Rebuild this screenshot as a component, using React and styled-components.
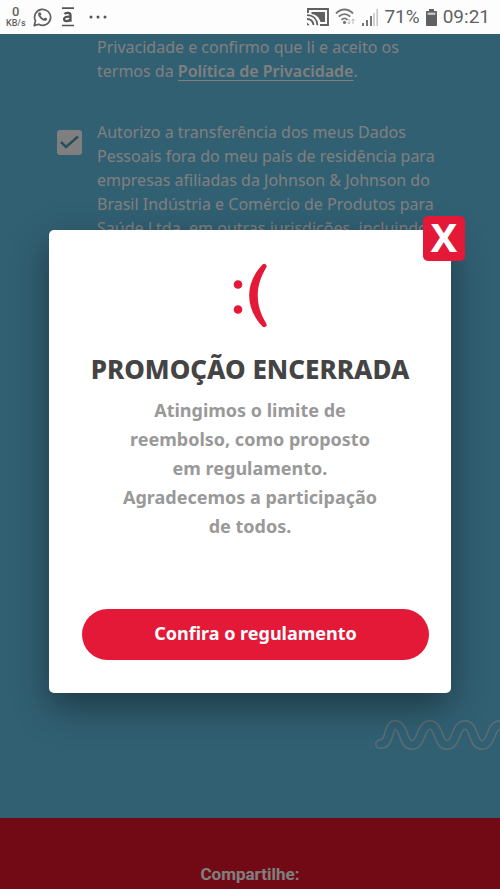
import React from "react";
import styled, { createGlobalStyle } from "styled-components";

const GlobalStyle = createGlobalStyle`
  *, *::before, *::after { box-sizing: border-box; }
  body { margin: 0; font-family: "Noto Sans", "Open Sans", sans-serif; }
`;

const Screen = styled.div`
  display: flex;
  flex-direction: column;
  min-height: 100vh;
`;

const StatusBar = styled.header`
  display: flex;
  align-items: center;
  justify-content: space-between;
  height: 34px;
  padding: 0 10px 0 6px;
  background: #fdfdfd;
  color: #626262;
  font-family: Roboto, sans-serif;
`;

const StatusGroup = styled.div`
  display: flex;
  align-items: center;
  gap: ${(p) => p.$gap}px;
`;

const NetSpeed = styled.div`
  display: flex;
  flex-direction: column;
  align-items: center;
  font-size: 9px;
  line-height: 11px;
  font-weight: 500;
`;

const NetValue = styled.span`
  font-size: 13px;
  line-height: 13px;
`;

const StatusText = styled.span`
  font-size: 19px;
  line-height: 24px;
`;

const Icon = styled.svg`
  display: block;
  flex: none;
`;

const Page = styled.div`
  position: relative;
  flex: 1;
  display: flex;
  flex-direction: column;
`;

const Content = styled.main`
  flex: 1;
  display: flex;
  flex-direction: column;
  justify-content: space-between;
  padding: 1px 0 67px;
  background: #62c0e6;
  color: #fff;
`;

const Consents = styled.div`
  display: flex;
  flex-direction: column;
  gap: 37px;
  padding: 0 60px 0 57px;
`;

const Consent = styled.label`
  display: grid;
  grid-template-columns: 26px 1fr;
  column-gap: 14px;
  font-size: 16px;
  line-height: 24px;
  white-space: nowrap;
`;

const ConsentText = styled.span`
  grid-column: 2;
`;

const Check = styled.input`
  appearance: none;
  width: 25px;
  height: 25px;
  margin: 10px 0 0;
  border-radius: 3px;
  background: #fff;
  grid-area: 1 / 1;
`;

const CheckMark = styled(Icon)`
  grid-area: 1 / 1;
  margin: 10px 0 0;
  pointer-events: none;
`;

const PolicyLink = styled.a`
  color: inherit;
  font-weight: 600;
  text-underline-offset: 3px;
`;

const Wave = styled(Icon)`
  align-self: flex-end;
`;

const Footer = styled.footer`
  height: 71px;
  padding-top: 44px;
  background: #e4142a;
  color: #fff;
  text-align: center;
  font: 700 17px/24px Roboto, sans-serif;
`;

const Overlay = styled.div`
  position: absolute;
  inset: 0;
  display: flex;
  align-items: center;
  padding: 0 49px;
  background: rgba(0, 0, 0, 0.5);
`;

const Dialog = styled.section`
  position: relative;
  flex: 1;
  min-width: 0;
  display: flex;
  flex-direction: column;
  align-items: center;
  padding: 33px 22px 33px 33px;
  border-radius: 5px;
  background: #fff;
  box-shadow: 0 14px 36px rgba(0, 0, 0, 0.4);
`;

const Close = styled.button`
  position: absolute;
  top: -14px;
  right: -14px;
  display: grid;
  place-items: center;
  width: 42px;
  height: 45px;
  padding: 0 0 3px;
  border: 0;
  border-radius: 5px;
  background: #e41837;
  color: #fff;
  font: 700 40px/42px "Noto Sans", sans-serif;
`;

const Message = styled.div`
  align-self: stretch;
  display: flex;
  flex-direction: column;
  align-items: center;
  margin-right: 11px;
  text-align: center;
`;

const Title = styled.h1`
  margin: 23px 0 9px;
  color: #444;
  font-size: 26px;
  line-height: 36px;
  font-weight: 800;
  white-space: nowrap;
`;

const Body = styled.p`
  margin: 0;
  color: #999;
  font-size: 18px;
  line-height: 29px;
  font-weight: 700;
  white-space: nowrap;
`;

const Action = styled.button`
  align-self: stretch;
  height: 51px;
  margin-top: 68px;
  padding: 0 0 3px;
  border: 0;
  border-radius: 26px;
  background: #e41837;
  color: #fff;
  font: 700 18px/24px "Noto Sans", sans-serif;
`;

const wavePath =
  "M6 25 C17 26 13 6 21 6 C31 6 28 26 38 26 C48 26 46 6 56 6 C66 6 63 26 73 26 C83 26 81 6 91 6 C101 6 98 26 108 26 C118 26 116 6 126 6 C136 6 133 26 143 26";

export default function App() {
  return (
    <Screen>
      <GlobalStyle />
      <StatusBar>
        <StatusGroup $gap={7}>
          <NetSpeed>
            <NetValue>0</NetValue>
            <span>KB/s</span>
          </NetSpeed>
          <Icon width="19" height="20" viewBox="0 0 19 20" fill="none" stroke="#606060" aria-label="WhatsApp">
            <path d="M1.2 18.6 2.5 14A8 8 0 1 1 5.7 17.3Z" strokeWidth="1.7" strokeLinejoin="round" />
            <path d="M6 5.3c-2 2.2.1 4.7 1.7 6.4 1.8 1.9 4.3 3 6.1 1.3.8-.9.4-1.3-.3-1.7l-1.4-.7-1.3 1.1c-1.5-.5-2.7-1.8-3.3-3.1l.9-1.2-.8-1.9Z" fill="#606060" stroke="none" />
          </Icon>
          <Icon width="22" height="20" viewBox="2 0 22 20" fill="none" stroke="#555" aria-label="a">
            <path d="M5 1.2h12M5 18.5h12" strokeWidth="1.7" />
            <path d="M7.5 7c1.3-1.7 6-1.7 6 1.2v6.5M13.4 9.6c-4.2-.2-6.3.5-6.3 2.5 0 2.7 4.6 2.9 6.3.1" strokeWidth="2.3" />
          </Icon>
          <Icon width="20" height="4" viewBox="0 0 20 4" fill="#555" aria-label="Mais">
            <circle cx="3" cy="2" r="1.5" />
            <circle cx="10" cy="2" r="1.5" />
            <circle cx="17" cy="2" r="1.5" />
          </Icon>
        </StatusGroup>
        <StatusGroup $gap={6}>
          <Icon width="22" height="18" viewBox="0 0 22 18" fill="none" stroke="#606060" aria-label="Transmissão">
            <path d="M1 5V1h20v16h-8" strokeWidth="1.9" />
            <path d="M4.5 4h13.5v10h-4.5C12.5 9.5 9 6.5 4.5 6Z" fill="#606060" stroke="none" />
            <path d="M0 7.2c6 0 10 4 10.5 10M0 11c3.5 0 6 2.4 6.5 6" strokeWidth="1.8" />
            <path d="M0 14.5 2.8 17.2H0Z" fill="#606060" stroke="none" />
          </Icon>
          <Icon width="21" height="18" viewBox="0 0 21 18" fill="none" stroke="#777" aria-label="Wi-Fi">
            <path d="M1 5.5C6 .2 13 .2 18 5.5M3.8 8.7c3.4-3.5 8-3.5 11.4 0M6.5 11.8c1.9-1.9 4.2-1.9 6 0" strokeWidth="1.9" />
            <circle cx="9.5" cy="14.4" r="1.6" fill="#777" stroke="none" />
            <path d="M14 11v5m-1.5-1.6L14 16l1.5-1.6M18 16v-5m-1.5 1.6L18 11l1.5 1.6" stroke="#bbb" strokeWidth="1" />
          </Icon>
          <Icon width="16" height="17" viewBox="0 0 16 17" fill="none" strokeWidth="2" aria-label="Sinal">
            <path d="M1 17v-3M5 17v-6M9 17V7" stroke="#777" />
            <path d="M12 17V4M15.2 17V0" stroke="#c4c4c4" strokeWidth="1.5" />
          </Icon>
          <StatusText>71%</StatusText>
          <Icon width="11" height="17" viewBox="0 0 11 17" aria-label="Bateria">
            <path d="M3 0h5v2h2.2q.8 0 .8.8v13.4q0 .8-.8.8H.8q-.8 0-.8-.8V2.8Q0 2 .8 2H3Z" fill="#606060" />
            <path d="M1.6 3.6h7.8v2.3H1.6Z" fill="#c8c8c8" />
          </Icon>
          <StatusText>09:21</StatusText>
        </StatusGroup>
      </StatusBar>
      <Page>
        <Content>
          <Consents>
            <Consent as="div">
              <ConsentText>
                Privacidade e confirmo que li e aceito os<br />
                termos da <PolicyLink href="#politica">Política de Privacidade</PolicyLink>.
              </ConsentText>
            </Consent>
            <Consent>
              <Check type="checkbox" defaultChecked />
              <CheckMark width="25" height="25" viewBox="0 0 25 25" fill="none" aria-hidden="true">
                <path d="m4 12 5 5L21 6.5" stroke="#4e9fbe" strokeWidth="2.5" />
              </CheckMark>
              <ConsentText>
                Autorizo a transferência dos meus Dados<br />
                Pessoais fora do meu país de residência para<br />
                empresas afiliadas da Johnson &amp; Johnson do<br />
                Brasil Indústria e Comércio de Produtos para<br />
                Saúde Ltda. em outras jurisdições, incluindo
              </ConsentText>
            </Consent>
          </Consents>
          <Wave width="126" height="32" viewBox="0 0 126 32" fill="none" strokeLinecap="round" aria-hidden="true">
            <path d={wavePath} stroke="#b8dcea" strokeWidth="10" />
            <path d={wavePath} stroke="#62c0e6" strokeWidth="7" />
          </Wave>
        </Content>
        <Footer>Compartilhe:</Footer>
        <Overlay>
          <Dialog role="dialog" aria-modal="true" aria-labelledby="dialog-title">
            <Close type="button" aria-label="Fechar">X</Close>
            <Message>
              <Icon width="34" height="65" viewBox="0 0 34 65" fill="#e41837" aria-label=":(">
                <circle cx="5" cy="21.5" r="4.3" />
                <circle cx="5" cy="46.5" r="4.3" />
                <path d="M28.6 2.4Q30.5-.3 32.8 1.4Q34.4 2.6 33 5C22 23 22 42 33 60Q34.4 62.4 32.8 63.6Q30.5 65.3 28.6 62.6C12 44 12 21 28.6 2.4Z" />
              </Icon>
              <Title id="dialog-title">PROMOÇÃO ENCERRADA</Title>
              <Body>
                Atingimos o limite de<br />
                reembolso, como proposto<br />
                em regulamento.<br />
                Agradecemos a participação<br />
                de todos.
              </Body>
            </Message>
            <Action type="button">Confira o regulamento</Action>
          </Dialog>
        </Overlay>
      </Page>
    </Screen>
  );
}
